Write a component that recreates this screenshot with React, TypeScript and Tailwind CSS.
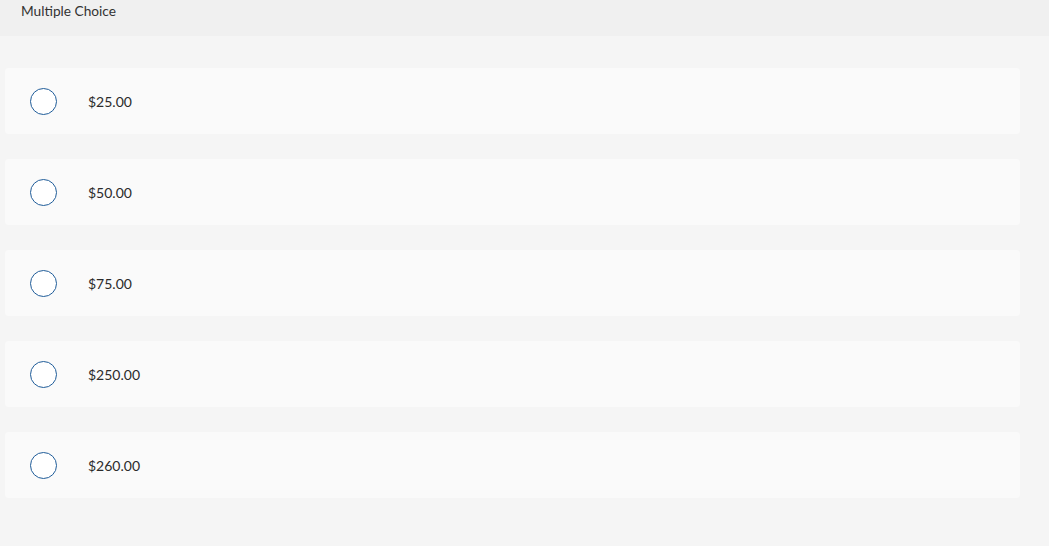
const options = ['$25.00', '$50.00', '$75.00', '$250.00', '$260.00'];

export default function App() {
  return (
    <div className="w-[1049px] h-[546px] bg-[#f5f5f5] text-[#333] font-['Lato','Liberation_Sans',sans-serif]">
      {/* header */}
      <div className="h-9 bg-[#f0f0f0] pl-[21px] pt-[3px] text-[13.7px] leading-4">Multiple Choice</div>

      <div className="pt-8 pl-[5px] w-[1020px] flex flex-col gap-[25px]">
        {options.map((opt) => (
          <div key={opt} className="h-[66px] bg-[#fafafa] rounded-[4px] flex items-center">
            <div className="ml-[25px] w-[27px] h-[27px] rounded-full border-[1.5px] border-[#1f5c99] bg-white"></div>
            <span className="ml-[31px] pt-[1px] text-[14px] text-[#2b2b2b]">{opt}</span>
          </div>
        ))}
      </div>
    </div>
  );
}
